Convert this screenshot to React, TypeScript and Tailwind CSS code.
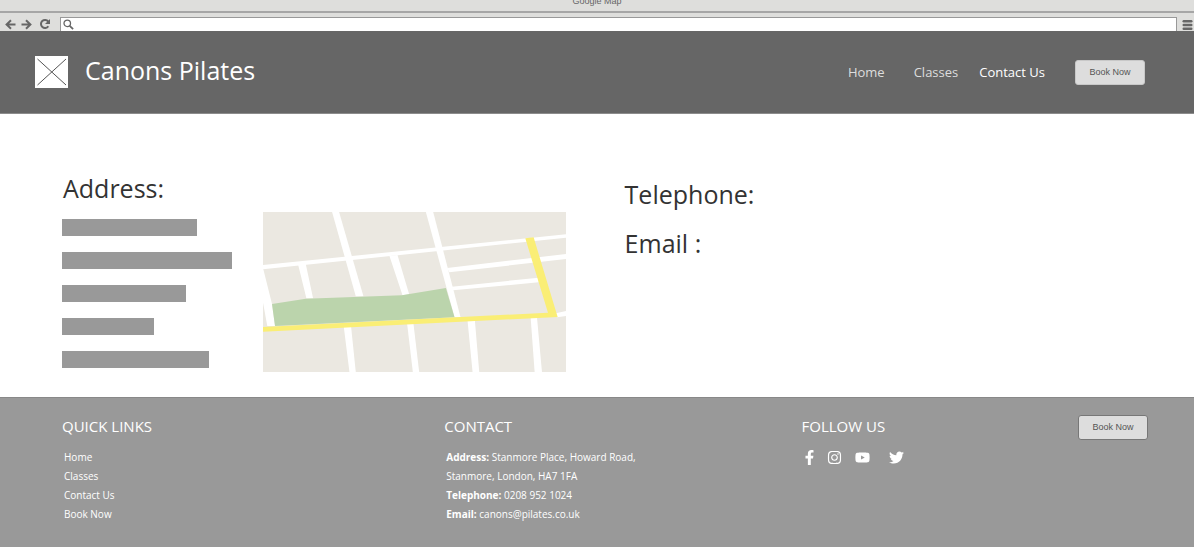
import type { ReactNode } from "react";
import { FaFacebookF, FaInstagram, FaYoutube, FaTwitter } from "react-icons/fa";

const addressLines = ["w-[135px]", "w-[170px]", "w-[124px]", "w-[92px]", "w-[147px]"];
const quickLinks = ["Home", "Classes", "Contact Us", "Book Now"];

function BrowserBar() {
  return (
    <div className="bg-[#dededc]">
      <div className="h-[13px] overflow-hidden border-b-2 border-[#a6a6a6] text-center font-['Liberation_Sans',sans-serif] text-[9px] leading-[2px] text-[#666]">
        Google Map
      </div>
      <div className="flex h-[18px] items-end overflow-hidden pr-px pl-[5px]">
        <div className="flex h-[14px] items-center gap-[5px] pr-[9px] text-[#666]">
          <button aria-label="Back">
            <svg className="h-[11px] w-[11px]" viewBox="0 0 11 11" fill="none" stroke="currentColor" strokeWidth="2">
              <path d="M10.5 5.5H2M6 1.3 1.6 5.5 6 9.7" />
            </svg>
          </button>
          <button aria-label="Forward">
            <svg className="h-[11px] w-[11px]" viewBox="0 0 11 11" fill="none" stroke="currentColor" strokeWidth="2">
              <path d="M.5 5.5H9M5 1.3l4.4 4.2L5 9.7" />
            </svg>
          </button>
          <button aria-label="Reload" className="ml-[2px]">
            <svg className="h-[12px] w-[12px]" viewBox="0 0 12 12" fill="none" stroke="currentColor" strokeWidth="2">
              <path d="M9.3 8.2A4 4 0 1 1 9.2 3.6" />
              <path d="M11 1v5H6z" fill="currentColor" stroke="none" />
            </svg>
          </button>
        </div>
        <div className="flex h-[14px] flex-1 items-center border-t border-r border-l border-[#999] bg-white pl-[2px] text-[#666]">
          <svg className="h-[11px] w-[11px]" viewBox="0 0 11 11" fill="none" stroke="currentColor">
            <circle cx="4.3" cy="4.3" r="3.3" strokeWidth="1.3" />
            <path d="m6.8 6.8 3.4 3.4" strokeWidth="1.8" />
          </svg>
          <input aria-label="Page address" className="h-full w-full bg-transparent px-1 text-[9px] outline-none" />
        </div>
        <button aria-label="Menu" className="ml-[5px] h-[12px] text-[#666]">
          <svg className="h-[12px] w-[11px]" viewBox="0 0 11 12" fill="currentColor">
            <rect x=".5" y="1" width="10" height="2.4" rx="1.2" />
            <rect x=".5" y="4.8" width="10" height="2.4" rx="1.2" />
            <rect x=".5" y="8.6" width="10" height="2.4" rx="1.2" />
          </svg>
        </button>
      </div>
    </div>
  );
}

function BookButton({ className }: { className: string }) {
  return (
    <button
      className={`h-[25px] w-[70px] rounded-[3px] border bg-[#dddddd] font-['Liberation_Sans',sans-serif] text-[9px] text-[#555] ${className}`}
    >
      Book Now
    </button>
  );
}

function Header() {
  return (
    <header className="flex h-[83px] items-center border-b border-[#8c8c8c] bg-[#666666] pr-[49px] pl-[35px] text-white">
      <svg className="h-[32px] w-[33px]" viewBox="0 0 33 32" role="img" aria-label="Logo">
        <rect width="33" height="32" fill="#fff" />
        <path d="M2.5 3 31 29M31 3 2.5 29" stroke="#555" strokeWidth="1" />
      </svg>
      <h1 className="flex-1 pb-[4px] pl-[17px] text-[25px] leading-[32px]">Canons Pilates</h1>
      <nav className="flex items-center text-[13px] leading-[18px] text-[#dddddd]">
        <a href="#home" className="mr-[29px]">Home</a>
        <a href="#classes" className="mr-[21px]">Classes</a>
        <a href="#contact" className="mr-[30px] text-white">Contact Us</a>
        <BookButton className="border-[#c8c8c8]" />
      </nav>
    </header>
  );
}

function StreetMap() {
  return (
    <svg className="h-[160px] w-[303px] shrink-0" viewBox="24 36 908 480" preserveAspectRatio="none" role="img" aria-label="Street map">
      <rect x="24" y="36" width="908" height="480" fill="#ebe8e1" />
      <g fill="#fff">
        <path d="M24 195 932 103v10L24 208z" />
        <path d="M231 36h21l73 253h-23z" />
        <path d="M512 36h22l82 316h-18z" />
        <path d="M129 193l23-2 22 104h-20z" />
        <path d="M403 168l24-3 35 118-20 3z" />
        <path d="M24 208l1 0 26 104 9 66H37L24 308z" />
        <path d="M576 204 932 162v15L582 217z" />
        <path d="M590 260 850 233v14L594 271z" />
        <path d="M266 380h22l14 136h-19z" />
        <path d="M456 372h19l17 144h-19z" />
        <path d="M637 362h22l13 154h-20z" />
        <path d="M826 352h19l15 164h-22z" />
        <path d="M895 341 932 333v15L905 352z" />
      </g>
      <path d="M51 312 152 296 440 286 572 264 598 352 60 378z" fill="#bbd4ac" />
      <path d="M24 381 878 338 810 115 835 112 907 351 24 395z" fill="#faee75" />
    </svg>
  );
}

function FooterColumn({ title, className, children }: { title: string; className: string; children: ReactNode }) {
  return (
    <section className={`pt-px ${className}`}>
      <h2 className="text-[15px] leading-[20px]">{title}</h2>
      {children}
    </section>
  );
}

function Footer() {
  return (
    <footer className="flex min-h-[150px] items-start border-t border-[#888] bg-[#999999] pt-[17px] pr-[46px] pl-[62px] text-white">
      <FooterColumn title="QUICK LINKS" className="w-[35.2%]">
        <ul className="mt-[12px] pl-[2px] text-[10px] leading-[19px]">
          {quickLinks.map((link) => (
            <li key={link}>
              <a href="#top">{link}</a>
            </li>
          ))}
        </ul>
      </FooterColumn>
      <FooterColumn title="CONTACT" className="w-[32.9%]">
        <address className="mt-[12px] pl-[2px] text-[10px] leading-[19px] not-italic">
          <p><b>Address:</b> Stanmore Place, Howard Road,</p>
          <p>Stanmore, London, HA7 1FA</p>
          <p><b>Telephone:</b> 0208 952 1024</p>
          <p><b>Email:</b> canons@pilates.co.uk</p>
        </address>
      </FooterColumn>
      <FooterColumn title="FOLLOW US" className="flex-1">
        <div className="mt-[14px] flex items-center text-[15px]">
          <a href="#facebook" aria-label="Facebook" className="mr-[10px]"><FaFacebookF /></a>
          <a href="#instagram" aria-label="Instagram" className="mr-[13px]"><FaInstagram /></a>
          <a href="#youtube" aria-label="YouTube" className="mr-[19px]"><FaYoutube /></a>
          <a href="#twitter" aria-label="Twitter"><FaTwitter /></a>
        </div>
      </FooterColumn>
      <BookButton className="border-[#777]" />
    </footer>
  );
}

export default function App() {
  return (
    <div className="flex min-h-screen flex-col bg-white font-['Open_Sans',sans-serif]">
      <BrowserBar />
      <Header />
      <main className="flex flex-1 items-start pt-[58px] pb-[24px] pl-[62px] text-[#333]">
        <section className="w-[49.7%]">
          <h2 className="pl-[1px] text-[25px] leading-[32px]">Address:</h2>
          <div className="mt-[8px] flex items-end">
            <div className="flex w-[201px] flex-col gap-[16px] self-start pt-[7px]">
              {addressLines.map((width) => (
                <div key={width} className={`h-[17px] bg-[#999999] ${width}`} />
              ))}
            </div>
            <StreetMap />
          </div>
        </section>
        <section className="flex flex-1 flex-col gap-[17px] pt-[6px] text-[25px] leading-[32px]">
          <h2>Telephone:</h2>
          <h2>Email :</h2>
        </section>
      </main>
      <Footer />
    </div>
  );
}
